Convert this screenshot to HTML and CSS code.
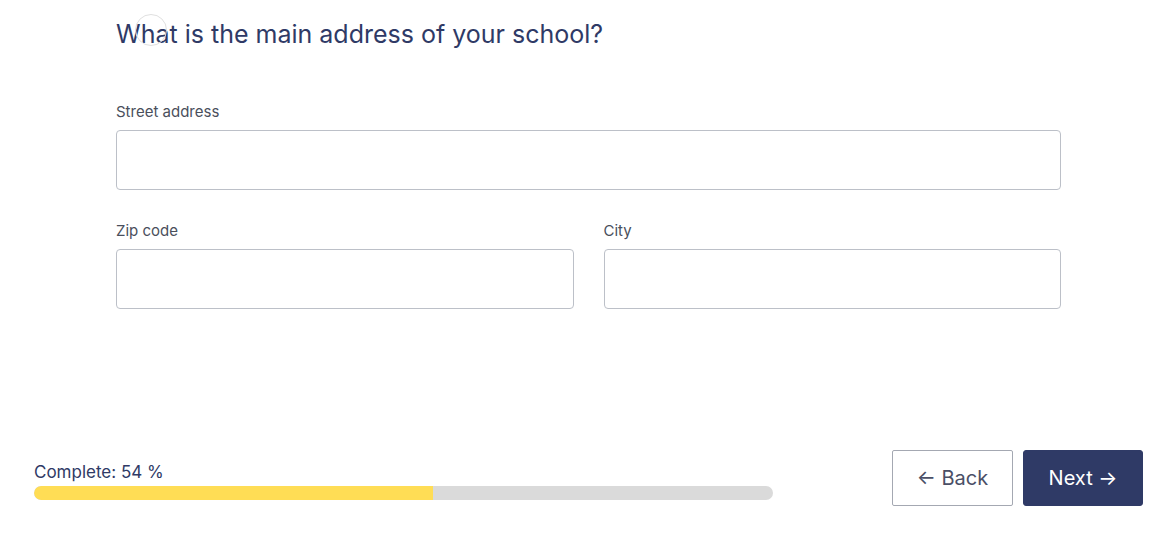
FILE: index.html
```html
<!DOCTYPE html>
<html lang="en">
<head>
<meta charset="utf-8">
<title>School address</title>
<link rel="stylesheet" href="styles.css">
</head>
<body>
<div class="page">
  <main class="form">
    <h1 class="title">What is the main address of your school?<span class="ring"></span></h1>
    <div class="field">
      <label class="label" for="street">Street address</label>
      <input class="input" id="street" type="text">
    </div>
    <div class="row">
      <div class="field">
        <label class="label" for="zip">Zip code</label>
        <input class="input" id="zip" type="text">
      </div>
      <div class="field">
        <label class="label" for="city">City</label>
        <input class="input" id="city" type="text">
      </div>
    </div>
  </main>
  <footer class="footer">
    <div class="progress">
      <div class="progress-label">Complete: 54 %</div>
      <div class="bar"><div class="bar-fill" style="width:54%"></div></div>
    </div>
    <div class="actions">
      <button class="btn btn-back" type="button">← Back</button>
      <button class="btn btn-next" type="button">Next →</button>
    </div>
  </footer>
</div>
</body>
</html>
```
FILE: styles.css
```css
* { box-sizing: border-box; }
html, body { margin: 0; padding: 0; background: #fff; }
body { font-family: Inter, "Noto Sans", sans-serif; color: #2f3a66; }
.page {
  height: 533px;
  display: flex;
  flex-direction: column;
}
.form {
  width: 945px;
  margin-left: 116px;
  display: flex;
  flex-direction: column;
}
.title {
  position: relative;
  margin: 0;
  padding-top: 18px;
  font-size: 25px;
  line-height: 32px;
  font-weight: 400;
  color: #2f3a66;
  margin-bottom: 52px;
}
.ring {
  position: absolute;
  left: 19px;
  top: 14px;
  width: 32px;
  height: 32px;
  border: 1px solid #e0e0e0;
  border-radius: 50%;
}
.field {
  display: flex;
  flex-direction: column;
  flex: 1;
}
.label {
  font-size: 15px;
  line-height: 20px;
  color: #4a4f5c;
  margin-bottom: 8px;
}
.input {
  height: 60px;
  border: 1px solid #bcc0c8;
  border-radius: 4px;
  font: inherit;
  padding: 0 14px;
  outline: none;
}
.row {
  display: flex;
  gap: 30px;
  margin-top: 31px;
}
.footer {
  margin-top: auto;
  padding: 0 30px 27px 34px;
  display: flex;
  justify-content: space-between;
  align-items: flex-end;
}
.progress {
  width: 739px;
  padding-bottom: 6px;
}
.progress-label {
  font-size: 17px;
  line-height: 24px;
  color: #2f3a66;
  margin-bottom: 2px;
}
.bar {
  height: 14px;
  border-radius: 7px;
  background: #dadada;
  overflow: hidden;
}
.bar-fill {
  height: 100%;
  background: #ffdd55;
  border-radius: 7px 0 0 7px;
}
.actions {
  display: flex;
  gap: 10px;
}
.btn {
  height: 56px;
  font-family: inherit;
  font-size: 20px;
  cursor: pointer;
}
.btn-back {
  width: 121px;
  background: #fff;
  border: 1px solid #a4a8b2;
  border-radius: 2px;
  color: #4a4f66;
}
.btn-next {
  width: 120px;
  background: #2f3a66;
  border: 1px solid #2f3a66;
  border-radius: 3px;
  color: #fff;
}
```
